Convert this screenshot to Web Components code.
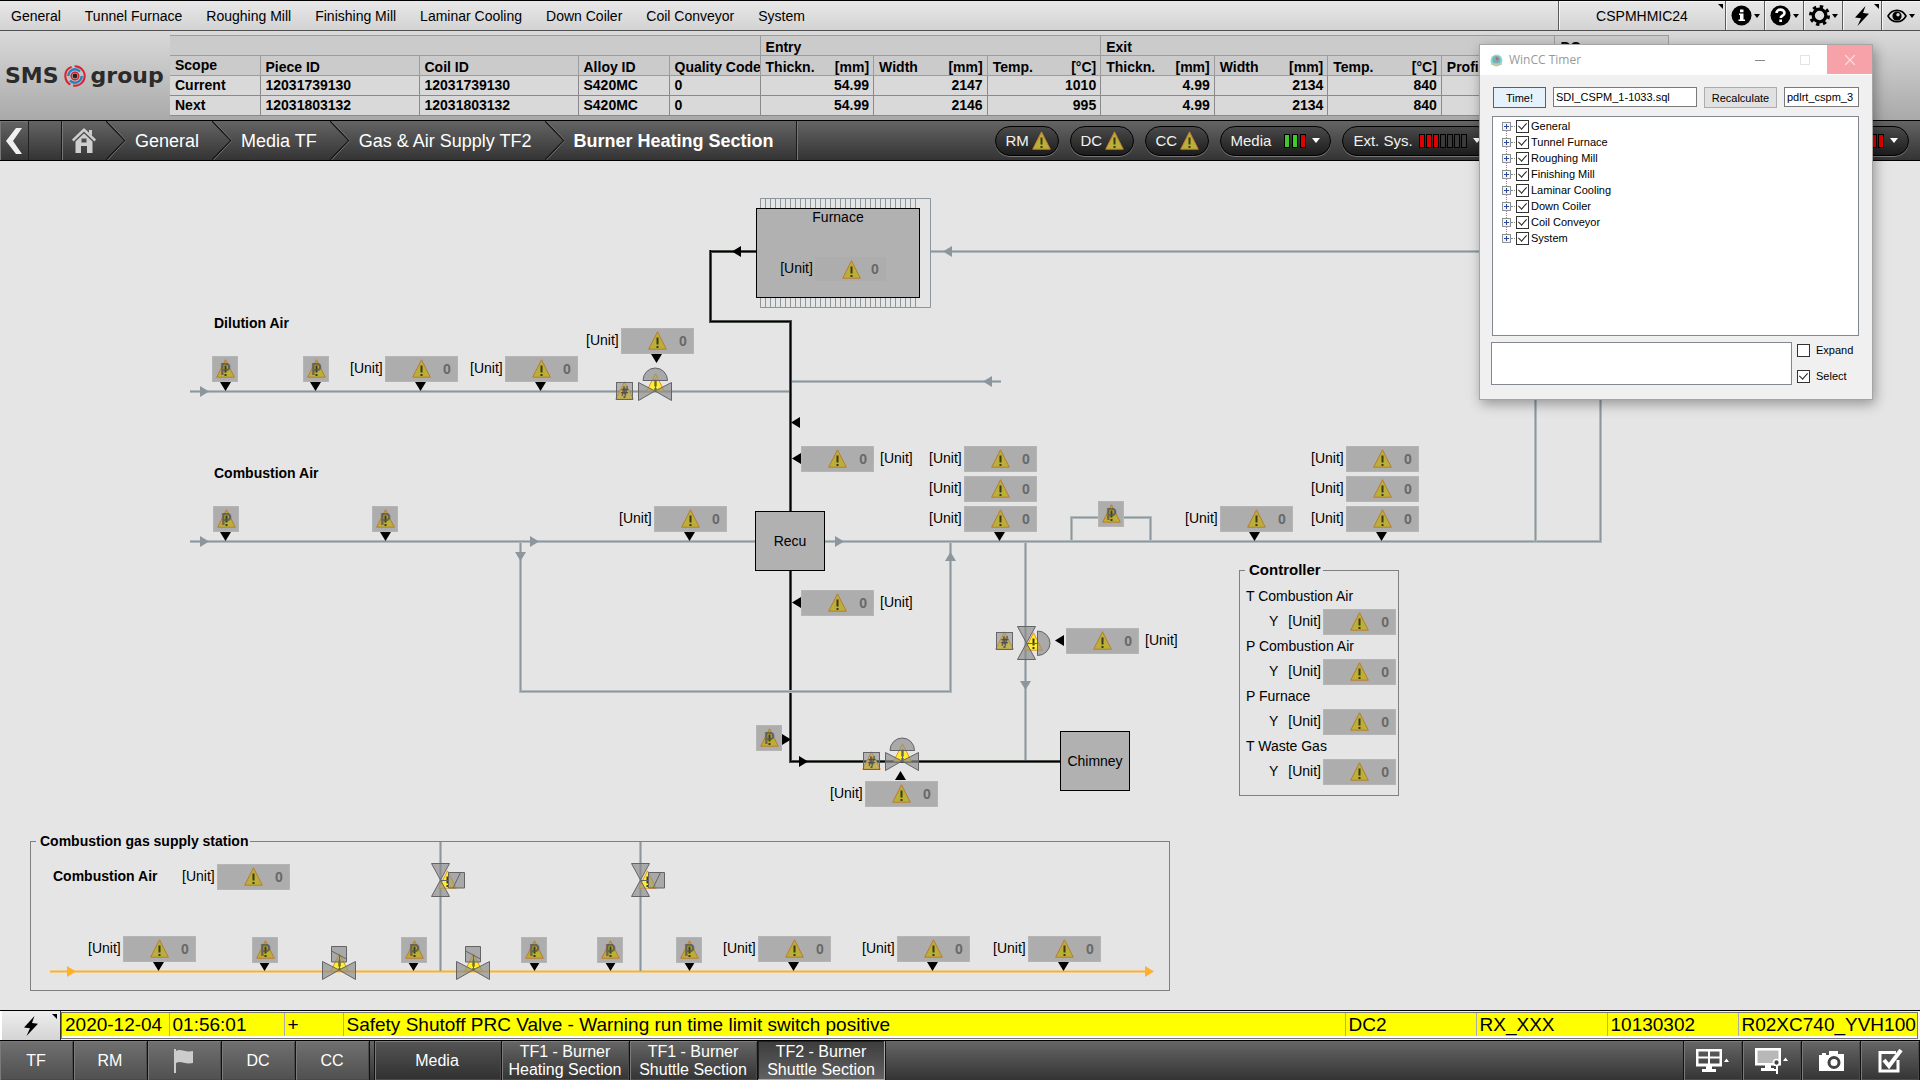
<!DOCTYPE html>
<html lang="en">
<head>
<meta charset="utf-8">
<title>Burner Heating Section</title>
<style>
  html, body { margin: 0; height: 100%; }
  body {
    display: flex; flex-direction: column; position: relative; overflow: hidden;
    background: #e5e5e5; color: #000;
    font: 14px/16px "Liberation Sans", Arial, sans-serif;
  }
</style>
</head>
<body>
<hmi-menubar></hmi-menubar>
<hmi-header></hmi-header>
<hmi-nav></hmi-nav>
<hmi-diagram></hmi-diagram>
<hmi-alarm></hmi-alarm>
<hmi-taskbar></hmi-taskbar>
<timer-window></timer-window>

<script>
const define = (name, html, after) => {
  const tpl = document.createElement('template');
  tpl.innerHTML = `<style>:host,*{box-sizing:border-box} button,input,textarea{font:inherit;color:inherit;margin:0;border-radius:0} button{padding:0;border:0;background:none;cursor:pointer} a{color:inherit;text-decoration:none} svg{display:block;flex:none}</style>` + html;
  customElements.define(name, class extends HTMLElement {
    constructor() {
      super();
      this.attachShadow({ mode: 'open' }).append(tpl.content.cloneNode(true));
    }
    connectedCallback() {
      const { x, y } = this.dataset;
      if (x) { this.style.left = x + 'px'; this.style.top = y + 'px'; }
      if (after) after(this, this.shadowRoot);
    }
  });
};

/* Warning triangle, 19 x 19 */
const warn = (fill = '#bab037', edge = '#bb7a30') => `
  <path d="M9.500 .8 18.300 18.200H.7Z" fill="${fill}" stroke="${edge}"/>
  <path d="M9.500 6.500v7M9.500 15v2" stroke="#3d3918" stroke-width="2"/>`;
const warnSvg = `<svg width="19" height="19" viewBox="0 0 19 19" aria-hidden="true">${warn()}</svg>`;
const bolt = `<svg width="16" height="20" viewBox="0 0 16 20"><path d="M11.500 0 1 11.500l6 .8L3.500 20 15 7.800l-6-.8Z"/></svg>`;
const caret = `<svg width="6" height="4" viewBox="0 0 6 4"><path d="M0 0h6L3 4Z"/></svg>`;

/* ---------- menu bar ---------- */
define('hmi-menubar', `
<style>
  :host { display: flex; flex: none; height: 31px; border-top: 1px solid #000; border-bottom: 1px solid #505050;
    background: linear-gradient(#e8e8e8, #d3d3d3); }
  nav { display: flex; align-items: center; gap: 24px; padding-left: 11px; flex: 1; }
  button { position: relative; width: 39px; display: flex; align-items: center; justify-content: center; gap: 2px;
    border-left: 1px solid #5a5a5a; box-shadow: inset 1px 1px #f6f6f6; }
  .station { width: 167px; }
  .corner::after { content: ""; position: absolute; right: 2px; top: 3px; border-top: 5px solid #000; border-left: 5px solid transparent; }
</style>
<nav><a href="#">General</a><a href="#">Tunnel Furnace</a><a href="#">Roughing Mill</a><a href="#">Finishing Mill</a><a href="#">Laminar Cooling</a><a href="#">Down Coiler</a><a href="#">Coil Conveyor</a><a href="#">System</a></nav>
<button class="station corner">CSPMHMIC24</button>
<button aria-label="Information"><svg width="21" height="21" viewBox="0 0 21 21"><circle cx="10.500" cy="10.500" r="10"/><path d="M8 8.500h4.500v6H14v1.500H7.500v-1.500H9V10H8ZM9 4.500h3.500v2.700H9Z" fill="#fff"/></svg>${caret}</button>
<button aria-label="Help"><svg width="21" height="21" viewBox="0 0 21 21"><circle cx="10.500" cy="10.500" r="10"/><path d="M6.500 8c0-4.500 8-4.500 8 0 0 2.800-3.800 2.500-3.800 5" fill="none" stroke="#fff" stroke-width="2.600"/><path d="M9.300 14.500H12V17H9.300Z" fill="#fff"/></svg>${caret}</button>
<button aria-label="Settings"><svg width="21" height="21" viewBox="0 0 21 21"><circle cx="10.500" cy="10.500" r="9" fill="none" stroke="#000" stroke-width="3" stroke-dasharray="3.400 3.670"/><circle cx="10.500" cy="10.500" r="6.300" fill="#ddd" stroke="#000" stroke-width="3.200"/></svg>${caret}</button>
<button class="corner" aria-label="Alarms">${bolt}</button>
<button aria-label="View"><svg width="20" height="14" viewBox="0 0 20 14"><path d="M1 7c4-7.500 14-7.500 18 0-4 7.500-14 7.500-18 0Z" fill="none" stroke="#000" stroke-width="1.600"/><circle cx="10" cy="7" r="4.600"/><circle cx="11" cy="5.800" r="1.700" fill="#ddd"/></svg>${caret}</button>
`);

/* ---------- header with piece table ---------- */
define('hmi-header', `
<style>
  :host { display: flex; flex: none; height: 89px; overflow: hidden; background: linear-gradient(#dadada, #a9a9a9); }
  .logo { display: flex; align-items: center; gap: 4px; width: 170px; padding-left: 5px; flex: none;
    font: bold 22px/26px "DejaVu Sans", sans-serif; color: #2b2b2b; }
  .logo svg { margin: 0 1px; }
  table { flex: none; margin-top: 4px; width: 1499px; height: 81px; table-layout: fixed; border-collapse: collapse; font-weight: bold; }
  td, th { height: 20px; padding: 0 4px 0 5px; border: 1px solid #8a8a8a; background: #d9d9d9; text-align: left; white-space: nowrap; overflow: hidden; line-height: 16px; }
  th { background: #cbcbcb; border-color: #9c9c9c; padding-top: 3px; }
  td { padding-bottom: 1px; }
  th.scope { padding: 0 5px 2px; }
  tr > :first-child { border-left: 0; }
  .n { text-align: right; }
  th div { display: flex; justify-content: space-between; }
  .clock { flex: 1; display: flex; flex-direction: column; align-items: center; padding: 12px 0 0; margin-right: 62px; margin-left: 127px; width: 0; font-size: 16px; line-height: 20px; color: #333; white-space: nowrap; }
  .clock b { font-size: 21px; line-height: 32px; color: #111; }
</style>
<div class="logo"><span>SMS</span><svg width="22" height="22" viewBox="0 0 22 22" fill="none"><circle cx="11" cy="11" r="9.700" stroke="#d8232a" stroke-width="2" stroke-dasharray="17 3 22 3"/><circle cx="11" cy="11" r="6.700" stroke="#2a7fc0" stroke-width="2.400" stroke-dasharray="16 5"/><circle cx="11" cy="11" r="3.700" stroke="#d8232a" stroke-width="1.600"/><circle cx="11" cy="11" r="2.400" fill="#222"/></svg><span>group</span></div>
<table>
  <colgroup><col style="width:90px"><col style="width:159px"><col style="width:159px"><col style="width:91px"><col style="width:91px"><col><col><col><col><col><col><col><col></colgroup>
  <tr><th colspan="5"></th><th colspan="3">Entry</th><th colspan="4">Exit</th><th>DC</th></tr>
  <tr><th class="scope">Scope</th><th>Piece ID</th><th>Coil ID</th><th>Alloy ID</th><th>Quality Code</th>
    <th><div><span>Thickn.</span><span>[mm]</span></div></th><th><div><span>Width</span><span>[mm]</span></div></th><th><div><span>Temp.</span><span>[°C]</span></div></th>
    <th><div><span>Thickn.</span><span>[mm]</span></div></th><th><div><span>Width</span><span>[mm]</span></div></th><th><div><span>Temp.</span><span>[°C]</span></div></th><th>Profile</th><th></th></tr>
  <tr><td>Current</td><td>12031739130</td><td>12031739130</td><td>S420MC</td><td>0</td><td class="n">54.99</td><td class="n">2147</td><td class="n">1010</td><td class="n">4.99</td><td class="n">2134</td><td class="n">840</td><td></td><td></td></tr>
  <tr><td>Next</td><td>12031803132</td><td>12031803132</td><td>S420MC</td><td>0</td><td class="n">54.99</td><td class="n">2146</td><td class="n">995</td><td class="n">4.99</td><td class="n">2134</td><td class="n">840</td><td></td><td></td></tr>
</table>
<div class="clock"><span>Friday</span><span>2020-12-04</span><b>01:56:08</b></div>
`);

/* ---------- status pill: slotted label, optional bars ---------- */
define('hmi-pill', `
<style>
  :host { display: flex; }
  button { min-width: 64px; height: 30px; padding: 0 6px 0 10px; display: flex; align-items: center; gap: 3px; white-space: nowrap;
    border: 1px solid #000; border-radius: 15px; background: linear-gradient(#4a4a4a, #1c1c1c);
    box-shadow: 0 1px #777; color: #f2f2f2; font-size: 15px; }
  :host([bars]) button { padding-right: 10px; }
  .bars { display: flex; gap: 1px; margin: 0 3px 0 0; }
  :host([wide]) .bars { gap: 2px; margin-left: 7px; }
  .bars:empty, .bars:empty + svg { display: none; }
  .bars i { width: 6px; height: 14px; border: 1px solid #000; background: #3a3a3a; }
  .bars .g { background: #3ccb28; } .bars .r { background: #e00000; }
</style>
<button><slot></slot><span class="w"></span><span class="bars"></span><svg width="8" height="5" viewBox="0 0 8 5"><path d="M0 0h8L4 5Z" fill="#fff"/></svg></button>`,
(el, root) => {
  const bars = el.getAttribute('bars');
  if (bars) root.querySelector('.bars').innerHTML = [...bars].map(c => `<i class="${c}"></i>`).join('');
  else root.querySelector('.w').innerHTML = warnSvg;
});

/* ---------- breadcrumb navigation ---------- */
const chev = `<svg width="20" height="39" viewBox="0 0 20 39" fill="none"><path d="M0 0 19 19.500 0 39" stroke="#141414" stroke-width="1.500"/><path d="M1.500 0 20 19.500 1.500 39" stroke="#757575"/></svg>`;
define('hmi-nav', `
<style>
  :host { display: flex; flex: none; height: 41px; border: solid #000; border-width: 1px 0; background: linear-gradient(#646464, #343434); color: #fff; }
  .back { width: 29px; border-right: 1px solid #222; display: flex; align-items: center; justify-content: center; box-shadow: inset 1px 1px #777; }
  nav { display: flex; align-items: center; margin-left: 32px; border-left: 1px solid #1a1a1a; border-right: 1px solid #1a1a1a; box-shadow: inset 1px 0 #777, 1px 0 #777; font-size: 18px; line-height: 22px; padding-right: 22px; white-space: nowrap; }
  .home { width: 44px; display: flex; justify-content: center; }
  nav a:not(.home) { padding: 0 13px 0 9px; }
  nav a:last-child { font-weight: bold; padding-right: 0; }
  .pills { display: flex; flex: 1; align-items: center; gap: 11px; margin-left: 198px; padding-right: 11px; }
  .last { margin-left: auto; }
</style>
<button class="back" aria-label="Back"><svg width="18" height="26" viewBox="0 0 18 26"><path d="M11 0h6L8 13l9 13h-6L1 13Z" fill="#f0f0f0"/></svg></button>
<nav><a class="home" href="#" aria-label="Home"><svg width="24" height="25" viewBox="0 0 24 25" fill="#cfcfcf"><path d="M12 0 24 11.500 22.500 13.500 12 3.500 1.500 13.500 0 11.500Z"/><path d="M17 2h3v6l-3-3Z"/><path d="M12 5.500 20.500 13.500V25H15v-7H9v7H3.500V13.500ZM9.500 10.500v4h5v-4Z" fill-rule="evenodd"/></svg></a>
${chev}<a href="#">General</a>${chev}<a href="#">Media TF</a>${chev}<a href="#">Gas &amp; Air Supply TF2</a>${chev}<a href="#">Burner Heating Section</a></nav>
<div class="pills"><hmi-pill>RM</hmi-pill><hmi-pill>DC</hmi-pill><hmi-pill>CC</hmi-pill><hmi-pill wide bars="ggr">Media</hmi-pill><hmi-pill bars="rrrdddd">Ext. Sys.</hmi-pill><hmi-pill class="last" bars="rrrr"></hmi-pill></div>
`);

/* ---------- measured value: unit label (slot) + grey value box ---------- */
define('hmi-readout', `
<style>
  :host { display: flex; align-items: center; gap: 2px; white-space: nowrap; }
  :host([data-x]) { position: absolute; }
  :host([after]) { flex-direction: row-reverse; gap: 6px; }
  .unit { padding-bottom: 2px; }
  output { position: relative; display: flex; align-items: center; justify-content: flex-end; width: 73px; height: 26px; padding-right: 6px;
    background: #adadad; border: 1px solid #b5b5b5; color: #686868; font-weight: bold; }
  output svg { position: absolute; left: 26px; top: 2px; }
  :host([flat]) output { width: 71px; height: 24px; border-color: #adadad; }
</style>
<span class="unit"><slot>[Unit]</slot></span><output>${warnSvg}0</output>`);

/* ---------- pressure point ---------- */
define('hmi-point', `
<style>
  :host { position: absolute; display: block; width: 26px; height: 26px; background: #adadad; border: 1px solid #b5b5b5; }
  svg { position: absolute; left: 3px; top: 2px; }
  span { position: absolute; left: 7px; top: 4px; font: bold 16px/18px "Liberation Sans", sans-serif; color: #555; opacity: .8; }
</style>${warnSvg}<span>P</span>`);

/* ---------- "#" marker beside a valve ---------- */
define('hmi-mark', `
<style>
  :host { position: absolute; display: block; width: 19px; height: 19px; }
  svg { position: absolute; left: 0; top: 0; }
  span { position: absolute; inset: 1px 1px 0 1px; border: 1px solid #666; background: rgb(130 130 130 / .5); color: #505050; font: italic bold 14px/16px "Liberation Sans", sans-serif; text-align: center; }
</style>
<svg width="19" height="19" viewBox="0 0 19 19">${warn('#ffe628', '#f09020')}</svg><span>#</span>`);

/* ---------- valve: kind = dome | box, optionally vertical ---------- */
const shapes = {
  dome: `<svg width="34" height="34" viewBox="0 0 34 34"><g transform="translate(8 6)">${warn('#ffee30', '#e89020')}</g>
    <g fill="#8c8c8c" fill-opacity=".68" stroke="#646464"><path d="M.5 15.500 17 24 .5 33.500Z"/><path d="M33.500 15.500 17 24l16.500 9.500Z"/><path d="M5 13.500a12.250 12.500 0 0 1 24.500 0Z"/><path d="M17.500 13.500V24"/></g></svg>`,
  domev: `<svg width="34" height="34" viewBox="0 0 34 34"><g transform="translate(7 6)">${warn('#ffee30', '#e89020')}</g>
    <g fill="#8c8c8c" fill-opacity=".68" stroke="#646464"><path d="M.5 .5 9.500 17 18.500 .5Z"/><path d="M.5 33.500 9.500 17l9 16.500Z"/><path d="M20.500 5a12.500 12.250 0 0 1 0 24.500Z"/><path d="M9.500 17.500H20.500"/></g></svg>`,
  box: `<svg width="34" height="34" viewBox="0 0 34 34"><g transform="translate(8 7)">${warn('#ffee30', '#e89020')}</g>
    <g fill="#8c8c8c" fill-opacity=".68" stroke="#646464"><path d="M.5 15.500 17 24 .5 33.500Z"/><path d="M33.500 15.500 17 24l16.500 9.500Z"/><path d="M9.500 .5h15v15.500h-15Z"/><path d="M9.500 5 24.500 13M17.500 9V24"/></g></svg>`,
  boxv: `<svg width="34" height="34" viewBox="0 0 34 34"><g transform="translate(7 7)">${warn('#ffee30', '#f09020')}</g>
    <g fill="#8c8c8c" fill-opacity=".68" stroke="#646464"><path d="M.5 .5 9.500 17 18.500 .5Z"/><path d="M.5 33.500 9.500 17l9 16.500Z"/><path d="M17.500 9.500h16v15.500h-16Z"/><path d="M29.500 9.500 22 25M9.500 17.500H17.500"/></g></svg>`
};
define('hmi-valve', `<style>:host{position:absolute;display:block;width:34px;height:34px}</style><div></div>`,
  (el, root) => { root.querySelector('div').innerHTML = shapes[el.getAttribute('kind')]; });

/* ---------- equipment block ---------- */
define('hmi-block', `
<style>
  :host { position: absolute; display: flex; align-items: center; justify-content: center; width: 70px; height: 60px; background: #b1b1b1; border: 1px solid #000; }
  :host([large]) { width: 164px; height: 90px; flex-direction: column; justify-content: flex-start; gap: 32px; }
</style><slot></slot>`);

/* ---------- titled frame ---------- */
define('hmi-frame', `
<style>
  :host { position: absolute; display: block; }
  fieldset { margin: 0; padding: 0; height: 100%; min-width: 0; border: 1px solid #808080; }
  legend { margin-left: 5px; padding: 0 2px 0 4px; font-weight: bold; }
  :host([strong]) legend { font-size: 15px; }
</style><fieldset><legend></legend><slot></slot></fieldset>`,
(el, root) => { root.querySelector('legend').textContent = el.getAttribute('label'); });

define('hmi-controller', `
<style>
  :host { display: block; padding: 10px 2px 0 6px; }
  section { height: 50px; }
  div { display: flex; align-items: center; justify-content: flex-end; gap: 10px; margin-top: 5px; }
  span { padding-bottom: 2px; }
</style>
${['T Combustion Air', 'P Combustion Air', 'P Furnace', 'T Waste Gas'].map(t => `<section>${t}<div><span>Y</span><hmi-readout></hmi-readout></div></section>`).join('')}`);

/* ---------- process diagram; coordinates start below the 161px of bars ---------- */
const TOP = 161;
const at = (x, y) => `data-x="${x}" data-y="${y - TOP}"`;
const pipe = (d, kind = 'g') => `<path class="${kind}o" d="${d}"/><path class="${kind}i" d="${d}"/>`;
/* arrow by tip position and direction */
const arrow = (x, y, dir, cls = 'k') => {
  const d = { l: 'l9-5.500v11Z', r: 'l-9-5.500v11Z', d: 'l-5.500-9h11Z', u: 'l-5.500 9h11Z' }[dir];
  return `<path class="${cls}" d="M${x} ${y}${d}"/>`;
};
let fins = '';
for (let x = 760.5; x < 918; x += 5) fins += `M${x} 198.500V307.500`;

const pipes = [
  pipe('M190 391.500H791'), pipe('M190 541.500H755'), pipe('M825 541.500H1600.500V251.500H930'), pipe('M1535.500 541.500V251.500'),
  pipe('M791 381.500H1001'),
  pipe('M710.500 251.500H757M710.500 250V321.500H790.500V761.500H1060', 'b'),
  pipe('M520.500 543V691.500H950.500V543'), pipe('M1025.500 543V760'),
  pipe('M1071.500 540V517.500H1150.500V540'),
  pipe('M50 971.500H1146', 'y'), pipe('M440.500 842V971'), pipe('M640.500 842V971')
].join('');

const arrows = [
  [209, 391.5, 'r', 'a'], [209, 541.5, 'r', 'a'], [539, 541.5, 'r', 'a'], [844, 541.5, 'r', 'a'], [943, 251.5, 'l', 'a'], [983, 381.5, 'l', 'a'],
  [520.5, 561, 'd', 'a'], [950.5, 552, 'u', 'a'], [1025.5, 690, 'd', 'a'], [76, 971.5, 'r', 'o'], [1154, 971.5, 'r', 'o'],
  [732, 251.5, 'l'], [791, 422.5, 'l'], [792, 458.5, 'l'], [792, 602.5, 'l'], [791, 739.5, 'r'], [808, 761.5, 'r'], [1055, 640.5, 'l'], [900.5, 771, 'u'],
  ...[225.5, 315.5, 420.5, 540.5].map(x => [x, 391, 'd']), [656.5, 363, 'd'],
  ...[225.5, 385.5, 689.5, 999.5, 1254.5, 1381.5].map(x => [x, 541, 'd']),
  ...[158.5, 264.5, 413.5, 534.5, 610.5, 689.5, 793.5, 932.5, 1063.5].map(x => [x, 971, 'd'])
].map(a => arrow(...a)).join('');

const left = [[350, 356], [470, 356], [586, 328], [619, 506], [929, 446], [929, 476], [929, 506], [1185, 506], [1311, 446], [1311, 476], [1311, 506],
  [830, 781], [182, 864], [88, 936], [723, 936], [862, 936], [993, 936]];
const right = [[801, 446], [801, 590], [1066, 628]];
const points = [[212, 356], [303, 356], [213, 506], [372, 506], [1098, 501], [756, 725], [252, 937], [401, 937], [521, 937], [597, 937], [676, 937]];

define('hmi-diagram', `
<style>
  :host { display: block; flex: 1; position: relative; overflow: hidden; background: #e5e5e5; min-height: 0; }
  .pipes { position: absolute; left: 0; top: 0; fill: none; }
  .go { stroke: #b2babe; stroke-width: 3 } .gi { stroke: #8b979d }
  .bo { stroke: #4c504a; stroke-width: 3 } .bi { stroke: #000; stroke-width: 1 }
  .yo { stroke: #f6cd84; stroke-width: 3 } .yi { stroke: #ffaf22 }
  .a { fill: #8b979d } .o { fill: #ffb02a } .k { fill: #000 } .fin { stroke: #8b979d }
  h2 { position: absolute; margin: 0; font-size: 14px; line-height: 16px; white-space: nowrap; }
  hmi-block hmi-readout { margin-right: 10px; }
</style>
<svg class="pipes" width="1920" height="849" viewBox="0 161 1920 849">${pipes}<path class="fin" d="M760.500 198.500H930.500V307.500H760.500Z${fins}"/>${arrows}</svg>
<hmi-block large ${at(756, 208)}><span>Furnace</span><hmi-readout flat></hmi-readout></hmi-block>
<hmi-block ${at(755, 511)}>Recu</hmi-block>
<hmi-block ${at(1060, 731)}>Chimney</hmi-block>
<h2 style="left:214px;top:154px">Dilution Air</h2>
<h2 style="left:214px;top:304px">Combustion Air</h2>
<h2 style="left:53px;top:707px">Combustion Air</h2>
<hmi-frame strong label="Controller" ${at(1239, 562)} style="width:160px;height:234px"><hmi-controller></hmi-controller></hmi-frame>
<hmi-frame label="Combustion gas supply station" ${at(30, 833)} style="width:1140px;height:158px"></hmi-frame>
${left.map(p => `<hmi-readout ${at(...p)}></hmi-readout>`).join('')}
${right.map(p => `<hmi-readout after ${at(...p)}></hmi-readout>`).join('')}
${points.map(p => `<hmi-point ${at(...p)}></hmi-point>`).join('')}
${[[615, 381], [862, 751], [995, 631]].map(p => `<hmi-mark ${at(...p)}></hmi-mark>`).join('')}
<hmi-valve kind="dome" ${at(638, 367)}></hmi-valve><hmi-valve kind="dome" ${at(885, 737)}></hmi-valve>
<hmi-valve kind="domev" ${at(1017, 626)}></hmi-valve>
<hmi-valve kind="box" ${at(322, 946)}></hmi-valve><hmi-valve kind="box" ${at(456, 946)}></hmi-valve>
<hmi-valve kind="boxv" ${at(431, 863)}></hmi-valve><hmi-valve kind="boxv" ${at(631, 863)}></hmi-valve>
`);

/* ---------- alarm line ---------- */
define('hmi-alarm', `
<style>
  :host { display: flex; flex: none; height: 30px; border-top: 1px solid #000; background: #f2f2f2; font-size: 19px; line-height: 22px; }
  button { position: relative; width: 61px; display: flex; align-items: center; justify-content: center; background: linear-gradient(#eee, #d4d4d4); border-right: 1px solid #333; border-left: 2px solid #fff; }
  button::after { content: ""; position: absolute; right: 3px; top: 3px; border-top: 5px solid #000; border-left: 5px solid transparent; }
  .line { flex: 1; min-width: 0; margin: 1px 2px 1px 0; border: 1px solid #777; background: #fff; }
  table { width: 100%; table-layout: fixed; border-collapse: collapse; }
  td { height: 23px; padding: 1px 0 0 3px; background: #ff0; border-right: 1px solid #aaa; white-space: nowrap; overflow: hidden; }
  td:last-child { border: 0; }
</style>
<button aria-label="Alarm list">${bolt}</button>
<div class="line"><table><colgroup><col style="width:107px"><col style="width:115px"><col style="width:59px"><col><col style="width:131px"><col style="width:131px"><col style="width:131px"><col style="width:179px"></colgroup>
<tr><td>2020-12-04</td><td>01:56:01</td><td>+</td><td>Safety Shutoff PRC Valve - Warning run time limit switch positive</td><td>DC2</td><td>RX_XXX</td><td>10130302</td><td>R02XC740_YVH100</td></tr></table></div>
`);

/* ---------- task bar ---------- */
define('hmi-taskbar', `
<style>
  :host { display: flex; flex: none; height: 40px; border-top: 1px solid #000; background: linear-gradient(#666, #343434); color: #fff; font-size: 16px; line-height: 18px; }
  button { display: flex; align-items: center; justify-content: center; width: 128px; border-right: 1px solid #111; box-shadow: inset 1px 1px #7a7a7a, inset -1px -1px #4a4a4a; text-align: center; }
  .s { width: 74px; padding-right: 1px; background: linear-gradient(#707070, #505050); }
  .m { border-left: 1px solid #111; margin-left: 4px; padding-right: 2px; background: linear-gradient(#555, #303030); }
  .on { background: linear-gradient(#3c3c3c, #626262); box-shadow: inset -1px -1px #a8a8a8, inset 1px 1px #222; }
  .t { padding-right: 1px; }
  .tools { display: flex; margin-left: auto; border-left: 1px solid #111; }
  .tools button { width: 59px; gap: 3px; }
</style>
<button class="s">TF</button><button class="s">RM</button>
<button class="s" aria-label="Flag"><svg width="20" height="24" viewBox="0 0 20 24"><path d="M0 0h2v24H0ZM2 2c5-3 9 2 17 0v12c-8 2-12-3-17 0Z" fill="#ccc"/></svg></button>
<button class="s">DC</button><button class="s">CC</button>
<button class="m">Media</button><button class="t">TF1 - Burner<br>Heating Section</button><button class="t">TF1 - Burner<br>Shuttle Section</button><button class="t on">TF2 - Burner<br>Shuttle Section</button>
<div class="tools">
<button aria-label="Screen layout"><svg width="34" height="24" viewBox="0 0 34 24" fill="#fff"><path d="M0 0h26v17.500H0ZM2.500 2.500v5H12v-5ZM14 2.500v5h9.500v-5ZM2.500 9.500v5H12v-5ZM14 9.500v5h9.500v-5Z" fill-rule="evenodd"/><path d="M10 17h6v3h4v3H6v-3h4ZM28 13l2.500-3.500L33 13Z"/></svg></button>
<button aria-label="Screen access"><svg width="34" height="26" viewBox="0 0 34 26" fill="#fff"><path d="M0 0h26v17.500H0Z"/><path d="M2.500 2.500h21v12.500h-21Z" fill="#b8b8b8"/><path d="M10 17h6v3h3v3H6v-3h4ZM28 13l2.500-3.500L33 13Z"/><circle cx="21.500" cy="14.500" r="3" fill="#444" stroke="#fff" stroke-width="1.700"/><path d="M21 18h2v8h-2ZM19 21h2v2h-2Z"/></svg></button>
<button aria-label="Screenshot"><svg width="25" height="20" viewBox="0 0 25 20"><path d="M0 4h3V2h4v2h3V0h9v3h6v17H0Z" fill="#fff"/><circle cx="15" cy="11.500" r="5" fill="#fff" stroke="#444" stroke-width="3"/></svg></button>
<button aria-label="Confirm"><svg width="25" height="24" viewBox="0 0 25 24" fill="none" stroke="#fff"><path d="M18 3.500H2v18.500h18V11" stroke-width="3"/><path d="M6 11l5 6L23 1" stroke-width="4"/></svg></button>
</div>
`);

/* ---------- floating timer window ---------- */
const tree = ['General', 'Tunnel Furnace', 'Roughing Mill', 'Finishing Mill', 'Laminar Cooling', 'Down Coiler', 'Coil Conveyor', 'System'];
define('timer-window', `
<style>
  :host { position: absolute; top: 44px; right: 47px; width: 394px; height: 356px; display: flex; flex-direction: column; background: #f0f0f0; border: 1px solid #a5a5a5; box-shadow: 2px 4px 12px rgb(0 0 0 / .35); font-size: 11px; line-height: 14px; }
  header { display: flex; flex: none; height: 30px; background: #fff; align-items: center; color: #999; font: 12px/14px "Open Sans", sans-serif; padding-left: 10px; gap: 6px; }
  header span { flex: 1; }
  header button { width: 45px; height: 29px; align-self: flex-start; display: flex; align-items: center; justify-content: center; }
  header .wins { display: flex; align-self: stretch; }
  .x { background: #f7a1a9; }
  .body { flex: 1; display: flex; flex-direction: column; padding: 12px 13px 13px 12px; min-height: 0; }
  .row { display: flex; gap: 7px; height: 21px; padding-left: 1px; }
  .row button { border: 1px solid #adadad; background: #e1e1e1; }
  .row button.def { border-color: #0078d7; background: #e5f1fb; width: 53px; }
  input[type=text] { height: 20px; min-width: 0; border: 1px solid #7a7a7a; background: #fff; padding: 0 2px; outline: 0; }
  ul { list-style: none; margin: 8px 0 6px; padding: 1px 0 0 9px; height: 220px; background: #fff; border: 1px solid #828790; }
  li { display: flex; align-items: center; height: 16px; }
  li i { position: relative; width: 9px; height: 9px; border: 1px solid #919191; background: linear-gradient(#2c4a9e, #2c4a9e) center/5px 1px no-repeat, linear-gradient(#2c4a9e, #2c4a9e) center/1px 5px no-repeat, #f4f4f4; }
  li i::after { content: ""; position: absolute; left: 8px; top: 3px; width: 4px; border-top: 1px dotted #888; }
  li:not(:last-child) i::before { content: ""; position: absolute; left: 3px; top: 8px; height: 7px; border-left: 1px dotted #888; }
  li label { display: flex; align-items: center; gap: 2px; margin-left: 5px; }
  input[type=checkbox] { appearance: none; position: relative; width: 13px; height: 13px; border: 1px solid #333; background: #fff; flex: none; }
  input[type=checkbox]:checked::after { content: ""; position: absolute; left: 3px; top: 0; width: 4px; height: 7px; border: solid #222; border-width: 0 1px 1px 0; transform: rotate(42deg); }
  .foot { display: flex; gap: 5px; margin-left: -1px; }
  textarea { width: 301px; height: 43px; border: 1px solid #828790; background: #fff; resize: none; outline: 0; padding: 2px; }
  .opts { display: flex; flex-direction: column; gap: 12px; padding-top: 1px; }
  .opts label { display: flex; align-items: center; gap: 6px; }
</style>
<header><svg width="13" height="13" viewBox="0 0 13 13"><circle cx="6.500" cy="6.500" r="6" fill="#9ad6cf"/><circle cx="6.500" cy="6" r="4" fill="#6fb2bd"/><path d="M6 2.500 9 5 6.500 7Z" fill="#e0584c"/><path d="M1 10h11" stroke="#c9c39a" stroke-width="1.500"/></svg><span>WinCC Timer</span>
<div class="wins"><button aria-label="Minimize"><svg width="10" height="10" viewBox="0 0 10 10"><path d="M0 5.500h10" stroke="#888"/></svg></button><button aria-label="Maximize"><svg width="10" height="10" viewBox="0 0 10 10"><path d="M.5 .5h9v9h-9Z" fill="none" stroke="#e3e3e3"/></svg></button><button class="x" aria-label="Close"><svg width="10" height="10" viewBox="0 0 10 10"><path d="M0 0 10 10M10 0 0 10" stroke="#fde3e5" stroke-width="1.200"/></svg></button></div></header>
<div class="body">
<div class="row"><button class="def">Time!</button><input type="text" aria-label="Database" value="SDI_CSPM_1-1033.sql" style="width:144px"><button style="width:73px">Recalculate</button><input type="text" aria-label="Picture" value="pdlrt_cspm_3" style="width:75px"></div>
<ul>${tree.map(t => `<li><i></i><label><input type="checkbox" checked>${t}</label></li>`).join('')}</ul>
<div class="foot"><textarea aria-label="Log"></textarea><div class="opts"><label><input type="checkbox">Expand</label><label><input type="checkbox" checked>Select</label></div></div>
</div>`);
</script>
</body>
</html>
